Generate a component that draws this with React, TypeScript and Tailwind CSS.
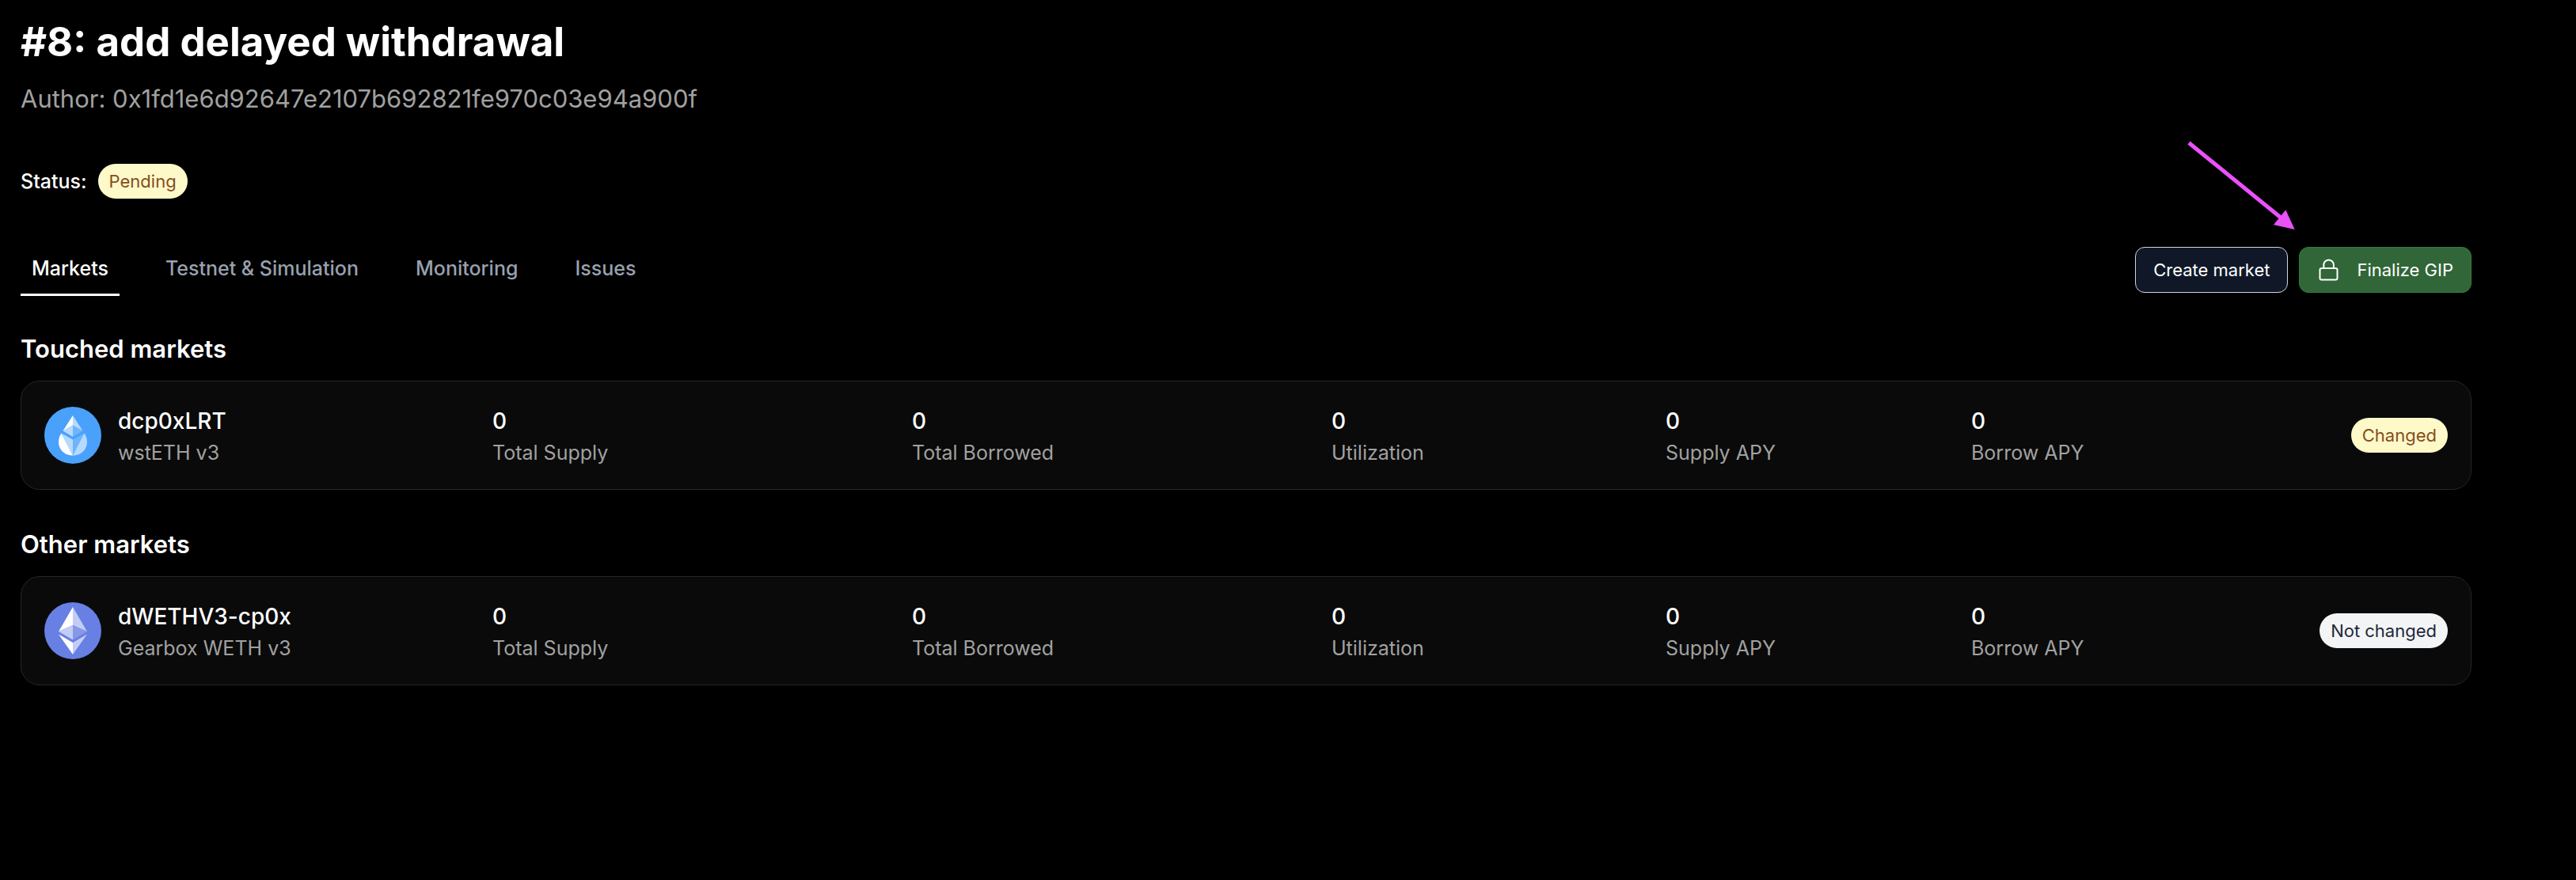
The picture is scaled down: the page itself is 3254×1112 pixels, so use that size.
import { useState } from "react";
import { clsx } from "clsx";

interface Market {
  name: string;
  pool: string;
  icon: "wsteth" | "weth";
  changed: boolean;
}

const tabs = ["Markets", "Testnet & Simulation", "Monitoring", "Issues"];

const stats = [
  "Total Supply",
  "Total Borrowed",
  "Utilization",
  "Supply APY",
  "Borrow APY",
];

const touchedMarkets: Market[] = [
  { name: "dcp0xLRT", pool: "wstETH v3", icon: "wsteth", changed: true },
];

const otherMarkets: Market[] = [
  {
    name: "dWETHV3-cp0x",
    pool: "Gearbox WETH v3",
    icon: "weth",
    changed: false,
  },
];

const WstEthIcon = () => (
  <svg viewBox="0 0 72 72" className="size-18 shrink-0" aria-hidden="true">
    <circle cx="36" cy="36" r="36" fill="#4aa1fb" />
    <path d="M36 11 23.500 30.500l12.500-7z" fill="#fff" />
    <path d="M36 11l12.500 19.500-12.500-7z" fill="#b6d9fe" />
    <path d="M36 23.500l-12.500 7 12.500 7.500z" fill="#b6d9fe" />
    <path d="M36 23.500l12.500 7-12.500 7.500z" fill="#6fb5fc" />
    <path
      d="M21.500 33.500C17 40 16.500 49 22 55.500c4 4.500 9 6 14 6z"
      fill="#fff"
    />
    <path d="M21.500 33.500 36 41.500v20z" fill="#b6d9fe" />
    <path d="M50.500 33.500 36 41.500v20z" fill="#6fb5fc" />
    <path
      d="M50.500 33.500C55 40 55.500 49 50 55.500c-4 4.500-9 6-14 6z"
      fill="#b6d9fe"
    />
  </svg>
);

const WethIcon = () => (
  <svg viewBox="0 0 72 72" className="size-18 shrink-0" aria-hidden="true">
    <circle cx="36" cy="36" r="36" fill="#687fe3" />
    <path d="M36 6 18 37l18-8z" fill="#fff" />
    <path d="M36 6l18 31-18-8z" fill="#c3ccf4" />
    <path d="M36 29 18 37l18 10.500z" fill="#c3ccf4" />
    <path d="M36 29l18 8-18 10.500z" fill="#8798e8" />
    <path d="M18 40.500 36 51v15z" fill="#fff" />
    <path d="M54 40.500 36 51v15z" fill="#c3ccf4" />
  </svg>
);

const LockIcon = () => (
  <svg
    viewBox="0 0 32 32"
    className="size-8"
    fill="none"
    stroke="currentColor"
    strokeWidth="2"
    aria-hidden="true"
  >
    <rect x="3.500" y="14" width="22" height="14.500" rx="2" />
    <path d="M8.300 14V9.700a6.300 6.300 0 0 1 12.600 0V14" />
  </svg>
);

interface BadgeProps {
  tone: "yellow" | "gray";
  children: string;
}

const Badge = ({ tone, children }: BadgeProps) => (
  <span
    className={clsx(
      "rounded-full px-3.5 py-2 text-[22px] leading-7 font-normal whitespace-nowrap",
      tone === "yellow"
        ? "bg-[#fef9c9] text-[#854d1e]"
        : "bg-gray-100 text-gray-800"
    )}
  >
    {children}
  </span>
);

const MarketCard = ({ market }: { market: Market }) => (
  <li className="grid grid-cols-[566fr_530fr_530fr_422fr_386fr_602fr] items-center rounded-3xl border border-[#262626] bg-[#0a0a0a] px-[29px] py-7">
    <div className="flex items-center gap-[21px]">
      {market.icon === "wsteth" ? <WstEthIcon /> : <WethIcon />}
      <div>
        <p className="text-[28px] leading-11 font-medium">{market.name}</p>
        <p className="text-[25px] leading-9 text-[#a1a1a1]">{market.pool}</p>
      </div>
    </div>
    {stats.map((label, i) => (
      <div key={label} className="flex items-center justify-between">
        <div>
          <p className="text-[28px] leading-11 font-medium">0</p>
          <p className="text-[25px] leading-9 text-[#a1a1a1]">{label}</p>
        </div>
        {i === stats.length - 1 && (
          <Badge tone={market.changed ? "yellow" : "gray"}>
            {market.changed ? "Changed" : "Not changed"}
          </Badge>
        )}
      </div>
    ))}
  </li>
);

const MarketSection = ({
  title,
  markets,
}: {
  title: string;
  markets: Market[];
}) => (
  <section>
    <h2 className="text-[31px] leading-10 font-semibold">{title}</h2>
    <ul className="mt-5 space-y-4">
      {markets.map((market) => (
        <MarketCard key={market.name} market={market} />
      ))}
    </ul>
  </section>
);

export default function App() {
  const [activeTab, setActiveTab] = useState("Markets");

  return (
    <main className="min-h-screen bg-black pr-33 pl-6.5 font-[Inter,sans-serif] text-white">
      <h1 className="pt-[17px] text-[51px] leading-[72px] font-bold">
        #8: add delayed withdrawal
      </h1>
      <p className="mt-4 text-[31px] leading-10 text-[#a1a1a1]">
        Author: 0x1fd1e6d92647e2107b692821fe970c03e94a900f
      </p>

      <div className="mt-[62px] flex items-center gap-3.5 text-[25px] leading-10 font-medium">
        <span>Status:</span>
        <Badge tone="yellow">Pending</Badge>
      </div>

      <div className="mt-14 flex items-center justify-between">
        <div role="tablist" className="flex gap-11">
          {tabs.map((tab) => (
            <button
              key={tab}
              role="tab"
              aria-selected={tab === activeTab}
              onClick={() => setActiveTab(tab)}
              className={clsx(
                "border-b-3 px-3.5 py-3 text-[25px] leading-10 font-medium",
                tab === activeTab
                  ? "border-white text-white"
                  : "border-transparent text-gray-400"
              )}
            >
              {tab}
            </button>
          ))}
        </div>
        <div className="relative flex gap-3.5 text-[22px] leading-8">
          <button className="rounded-xl border border-gray-300 bg-gray-900 px-5.5 py-3">
            Create market
          </button>
          <button className="flex items-center gap-[18px] rounded-xl border border-[#357a3f] bg-[#316638] px-5.5 py-3">
            <LockIcon />
            Finalize GIP
          </button>
          {/* pointer to the finalize action */}
          <svg
            viewBox="0 0 136 114"
            className="absolute right-[223px] bottom-[79px] h-[114px] w-[136px]"
            aria-hidden="true"
          >
            <path d="M2 3.500l118 96" stroke="#ea51f8" strokeWidth="5" />
            <path d="M135.700 113l-26.700-6 15.300-18.700z" fill="#ea51f8" />
          </svg>
        </div>
      </div>

      <div className="mt-[47px] flex flex-col gap-[49px]">
        <MarketSection title="Touched markets" markets={touchedMarkets} />
        <MarketSection title="Other markets" markets={otherMarkets} />
      </div>
    </main>
  );
}
